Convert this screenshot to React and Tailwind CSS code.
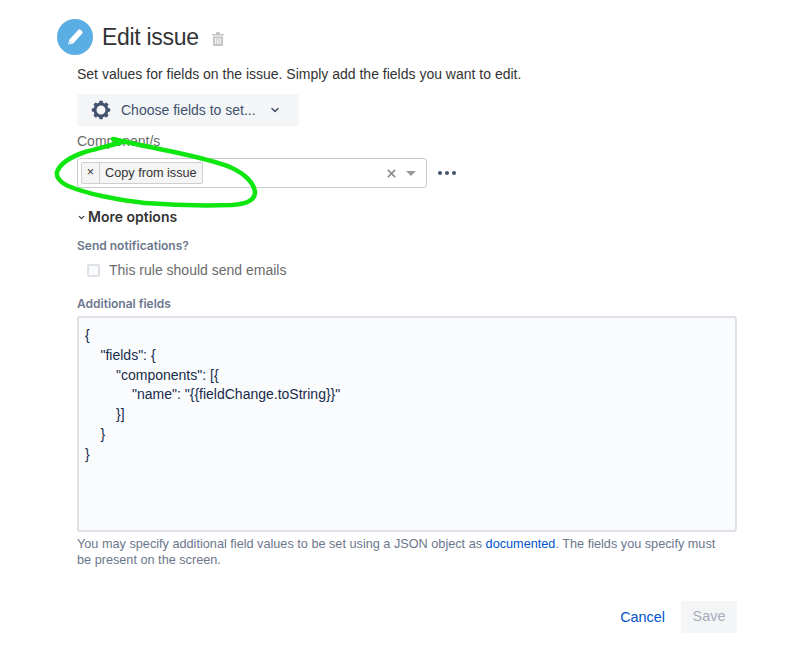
import { ChevronDown } from "lucide-react";

const JSON_LINES = [
  [0, "{"],
  [1, '"fields": {'],
  [2, '"components": [{'],
  [3, '"name": "{{fieldChange.toString}}"'],
  [2, "}]"],
  [1, "}"],
  [0, "}"],
];

const INDENT = ["pl-0", "pl-[15.5px]", "pl-[31px]", "pl-[47px]"];
const TEETH = [0, 45, 90, 135, 180, 225, 270, 315];

function PencilIcon() {
  return (
    <svg viewBox="0 0 36 36" className="w-9 h-9 shrink-0">
      <circle cx="18" cy="18" r="18" fill="#5aaee3" />
      <path d="M11 25.500l1.300-4.700 8.900-9.900a1.700 1.700 0 0 1 2.400-.1l1.500 1.400a1.700 1.700 0 0 1 .1 2.400l-9 9.800z" fill="#fff" />
      <path d="M11.500 25l1.100-3 1.900 1.800z" fill="#5aaee3" opacity=".5" />
    </svg>
  );
}

function TrashIcon() {
  return (
    <svg viewBox="0 0 12 14" className="w-[12px] h-[14px] mt-1">
      <path
        d="M4 1.200C4 .5 4.500 0 5 0h2c.6 0 1 .5 1 1.200V2h3.300c.4 0 .7.300.7.700V3.500H0V2.700C0 2.300.3 2 .7 2H4zM1 4.500h10V13c0 .6-.4 1-1 1H2c-.6 0-1-.4-1-1zM3.200 6v6h1.100V6zm2.300 0v6h1.100V6zm2.200 0v6h1.100V6z"
        fill="#c4c4c4"
        fillRule="evenodd"
      />
    </svg>
  );
}

function GearIcon() {
  return (
    <svg viewBox="0 0 20 20" className="w-[20px] h-[20px] shrink-0">
      <circle cx="10" cy="10" r="6" fill="none" stroke="#42526e" strokeWidth="3" />
      {TEETH.map((deg) => (
        <rect key={deg} x="8.200" y="0.800" width="3.600" height="4" rx="0.800" fill="#42526e" transform={`rotate(${deg} 10 10)`} />
      ))}
    </svg>
  );
}

export default function App() {
  return (
    <div className="relative w-[792px] h-[656px] overflow-hidden bg-white font-['Liberation_Sans',sans-serif] text-[#333]">
      <div className="pl-[57px] pt-[19px] flex items-center">
        <PencilIcon />
        <h1 className="ml-[9px] text-[23px] tracking-[-0.3px] leading-9 text-[#333]">Edit issue</h1>
        <div className="ml-[13px]"><TrashIcon /></div>
      </div>

      <div className="pl-[77px] w-[737px]">
        <p className="mt-[10px] text-[14px] leading-[18px] text-[#333]">
          Set values for fields on the issue. Simply add the fields you want to edit.
        </p>

        <button className="mt-[11px] w-[222px] h-8 flex items-center rounded-[3px] bg-[#f4f5f7] text-[#42526e] text-[14px] pl-[14px]">
          <GearIcon />
          <span className="ml-[10px]">Choose fields to set...</span>
          <ChevronDown className="w-[12px] h-[12px] ml-[13px]" strokeWidth={3} />
        </button>

        <label className="block mt-[7px] text-[14px] leading-4 text-[#6b6b6b]">Component/s</label>

        <div className="mt-[9px] flex items-center">
          <div className="w-[350px] h-[30px] flex items-center rounded-[3px] border border-[#c9c9c9] bg-white pl-[3px] pr-[10px]">
            <div className="h-[22px] flex items-center rounded-[2px] border border-[#cfcfcf] bg-[#f5f5f5] text-[12.700px] text-[#333]">
              <span className="w-[18px] h-full flex items-center justify-center border-r border-[#cfcfcf]">×</span>
              <span className="px-[5px] pt-px">Copy from issue</span>
            </div>
            <svg viewBox="0 0 10 10" className="ml-auto w-[9px] h-[9px]">
              <path d="M1 1l8 8M9 1l-8 8" stroke="#8c8c8c" strokeWidth="1.800" />
            </svg>
            <div className="ml-[10px] w-0 h-0 border-x-[5px] border-x-transparent border-t-[5px] border-t-[#9a9a9a]" />
          </div>
          <div className="ml-[11px] flex gap-[3px]">
            <span className="w-1 h-1 rounded-full bg-[#42526e]" />
            <span className="w-1 h-1 rounded-full bg-[#42526e]" />
            <span className="w-1 h-1 rounded-full bg-[#42526e]" />
          </div>
        </div>

        <div className="mt-[19px] flex items-center font-['Inter',sans-serif] text-[14px] leading-5 font-semibold text-[#333]">
          <ChevronDown className="w-[9px] h-[9px] mr-[2px]" strokeWidth={3} />
          More options
        </div>

        <div className="mt-[11px] font-['Inter',sans-serif] text-[12px] leading-4 font-semibold text-[#6b778c]">Send notifications?</div>

        <label className="mt-[6px] ml-[10px] flex items-center text-[14px] leading-5 text-[#6b6b6b]">
          <span className="w-[13px] h-[13px] rounded-[2px] border-2 border-[#dfe1e6] bg-[#fafbfc]" />
          <span className="ml-[9px]">This rule should send emails</span>
        </label>

        <div className="mt-[16px] font-['Inter',sans-serif] text-[12px] leading-4 font-semibold text-[#6b778c]">Additional fields</div>

        <div className="mt-[4px] w-[660px] h-[216px] rounded-[3px] border-2 border-[#dfe1e6] bg-[#fafbfc] px-[6px] pt-[8px] text-[14px] leading-[19.800px] text-[#172b4d]">
          {JSON_LINES.map(([depth, text], i) => (
            <div key={i} className={INDENT[depth]}>{text}</div>
          ))}
        </div>

        <p className="mt-[4px] w-[650px] text-[12.700px] leading-4 text-[#6b778c]">
          You may specify additional field values to be set using a JSON object as{" "}
          <a className="text-[#0052cc]">documented</a>. The fields you specify must be present on the screen.
        </p>

        <div className="mt-[33px] w-[660px] flex items-center justify-end">
          <a className="pt-[2px] text-[14.400px] text-[#0052cc]">Cancel</a>
          <button className="ml-4 w-14 h-8 rounded-[3px] bg-[#f4f5f7] text-[14.400px] text-[#a5adba]">Save</button>
        </div>
      </div>

      {/* hand drawn highlight */}
      <svg viewBox="0 0 792 656" className="absolute inset-0 w-[792px] h-[656px] pointer-events-none">
        <path
          d="M113 139C125 142 155 148 183 154C205 159 222 163 232 168C245 174 254 183 255 192C255 200 248 204 232 205C205 206 170 205 145 203C115 200 85 193 68 186C60 182 56 177 57 172C60 164 70 157 85 152C95 149 110 146 125 141"
          fill="none"
          stroke="#0fe60f"
          strokeWidth="4.500"
          strokeLinecap="round"
          strokeLinejoin="round"
        />
      </svg>
    </div>
  );
}
